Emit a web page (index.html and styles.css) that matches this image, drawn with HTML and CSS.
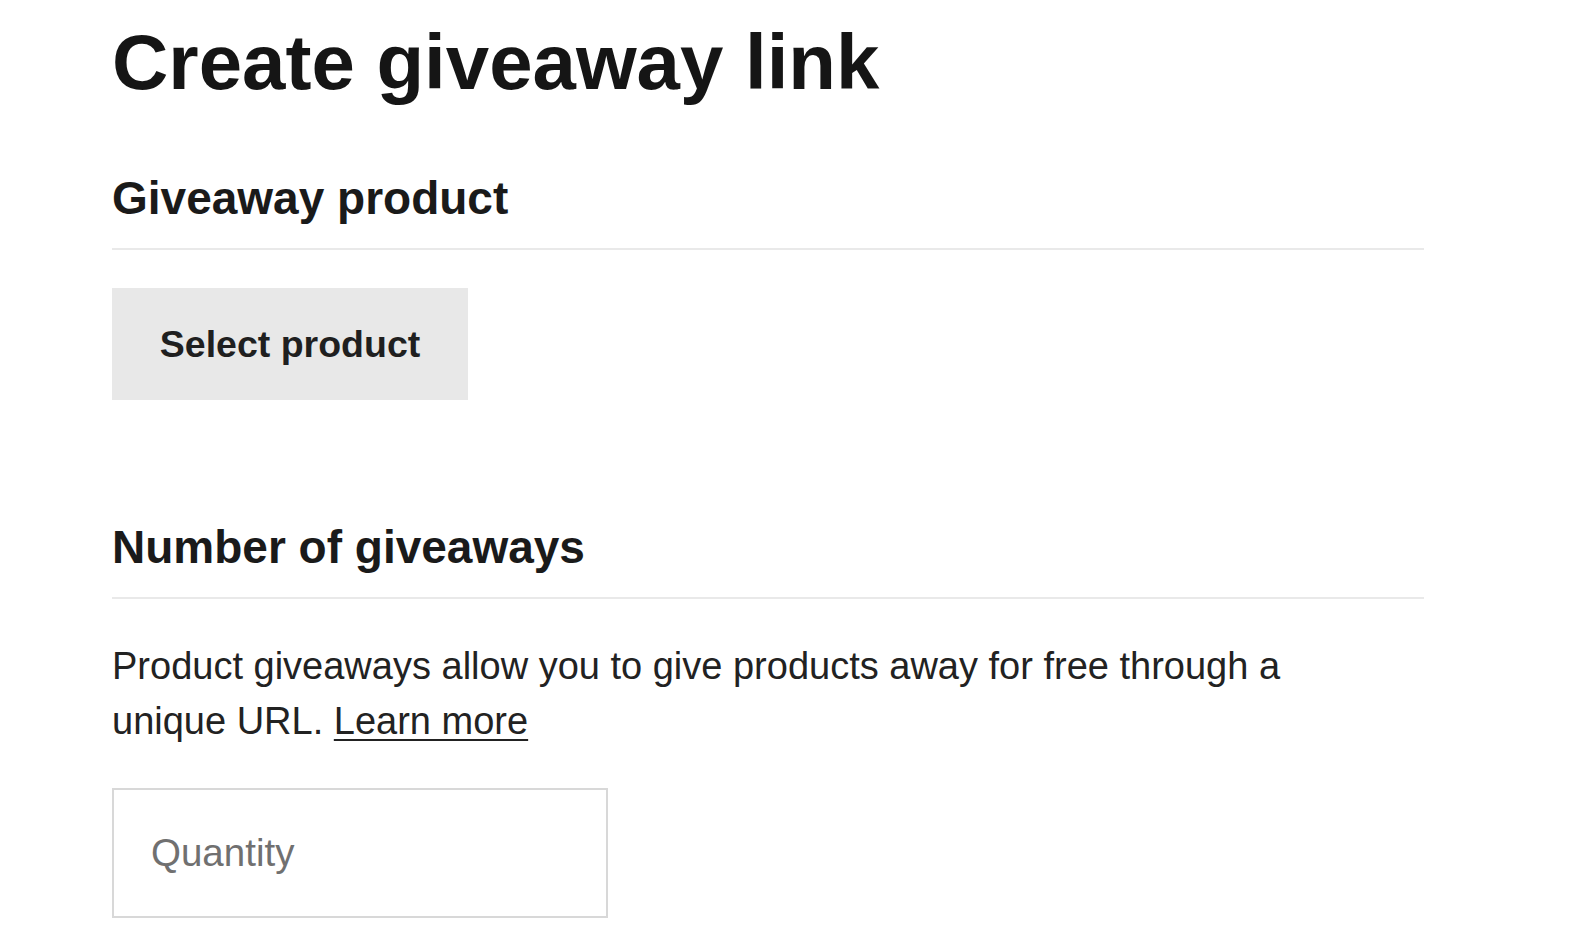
FILE: index.html
```html
<!DOCTYPE html>
<html lang="en">
<head>
<meta charset="utf-8">
<title>Create giveaway link</title>
<link rel="stylesheet" href="styles.css">
</head>
<body>
<main class="page">
  <h1 class="title">Create giveaway link</h1>

  <section class="section">
    <h2 class="section-title">Giveaway product</h2>
    <button class="select-btn" type="button">Select product</button>
  </section>

  <section class="section section-number">
    <h2 class="section-title">Number of giveaways</h2>
    <p class="desc">Product giveaways allow you to give products away for free through a unique URL. <a class="learn" href="#">Learn more</a></p>
    <input class="qty" type="text" placeholder="Quantity">
  </section>
</main>
</body>
</html>
```

FILE: styles.css
```css
html, body {
  margin: 0;
  padding: 0;
  background: #ffffff;
}

body {
  font-family: "Liberation Sans", Arial, sans-serif;
  color: #222222;
}

.page {
  width: 1312px;
  padding: 17px 0 0 112px;
  display: flex;
  flex-direction: column;
}

.title {
  margin: 0;
  font-size: 78px;
  line-height: 91px;
  font-weight: 700;
  color: #151515;
}

.section {
  display: flex;
  flex-direction: column;
  align-items: flex-start;
}

.section-title {
  align-self: stretch;
  margin: 62px 0 0 0;
  padding-bottom: 22px;
  border-bottom: 2px solid #e9e9e9;
  font-size: 46px;
  line-height: 56px;
  font-weight: 700;
  color: #1a1a1a;
}

.select-btn {
  margin-top: 38px;
  width: 356px;
  height: 112px;
  border: none;
  background: #e8e8e8;
  font-family: "Liberation Sans", Arial, sans-serif;
  font-size: 37.5px;
  font-weight: 700;
  color: #1f1f1f;
  padding: 0;
  cursor: pointer;
}

.section-number .section-title {
  margin-top: 119px;
}

.desc {
  margin: 40px 0 0 0;
  max-width: 1230px;
  font-size: 38px;
  line-height: 55px;
  color: #222222;
}

.learn {
  color: #222222;
  text-decoration: underline;
  text-decoration-thickness: 2px;
  text-underline-offset: 5px;
}

.qty {
  box-sizing: border-box;
  margin-top: 39px;
  width: 496px;
  height: 130px;
  border: 2px solid #d8d8d8;
  padding: 0 0 0 37px;
  font-family: "Liberation Sans", Arial, sans-serif;
  font-size: 38.5px;
  color: #222222;
  background: #ffffff;
  outline: none;
}

.qty::placeholder {
  color: #707070;
}
```
